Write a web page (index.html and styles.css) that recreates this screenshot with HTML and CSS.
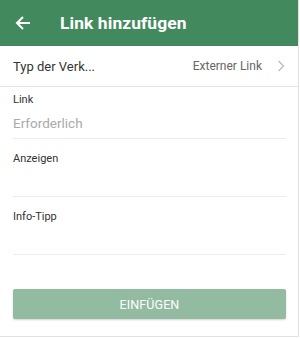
FILE: index.html
```html
<!DOCTYPE html>
<html lang="de">
<head>
<meta charset="utf-8">
<link rel="stylesheet" href="styles.css">
</head>
<body>
<div class="screen">
  <header class="appbar">
    <svg class="back" width="16" height="16" viewBox="0 0 16 16"><path d="M15 8H2M8 2L2 8l6 6" fill="none" stroke="#fff" stroke-width="2"/></svg>
    <h1 class="title">Link hinzufügen</h1>
  </header>
  <div class="typerow">
    <span class="typelabel">Typ der Verk...</span>
    <span class="typevalue">Externer Link</span>
    <svg class="chev" width="8" height="12" viewBox="0 0 8 12"><path d="M1.5 1l5 5-5 5" fill="none" stroke="#bdbdbd" stroke-width="1.4"/></svg>
  </div>
  <div class="fields">
    <div class="field first">
      <div class="label">Link</div>
      <div class="input placeholder">Erforderlich</div>
    </div>
    <div class="field">
      <div class="label">Anzeigen</div>
      <div class="input"></div>
    </div>
    <div class="field">
      <div class="label">Info-Tipp</div>
      <div class="input"></div>
    </div>
    <button class="submit">EINFÜGEN</button>
  </div>
</div>
</body>
</html>
```
FILE: styles.css
```css
html, body {
  margin: 0;
  padding: 0;
  background: #ffffff;
}
body {
  font-family: Roboto, "Liberation Sans", sans-serif;
}
.screen {
  width: 298px;
  height: 336px;
  border-right: 1px solid #e2e2e2;
  border-bottom: 1px solid #e2e2e2;
  background: #fff;
}
.appbar {
  height: 46px;
  background: #428a5d;
  display: flex;
  align-items: center;
  padding-left: 15px;
}
.back {
  display: block;
}
.title {
  margin: 0 0 0 29px;
  font-size: 17.4px;
  font-weight: 700;
  color: #fff;
  letter-spacing: 0.1px;
}
.typerow {
  height: 40px;
  border-bottom: 1px solid #e4e4e4;
  display: flex;
  align-items: center;
  padding: 0 13px;
}
.typelabel {
  font-size: 13px;
  color: #333;
  flex: 1;
}
.typevalue {
  font-size: 12px;
  color: #666;
  margin-right: 15px;
}
.chev {
  display: block;
}
.fields {
  padding: 0 12px 0 13px;
}
.field {
  padding-top: 13px;
  padding-bottom: 1px;
  border-bottom: 1px solid #ececec;
}
.field.first {
  padding-top: 6px;
  padding-bottom: 2px;
}
.label {
  font-size: 11px;
  line-height: 14px;
  color: #333;
}
.input {
  margin-top: 3px;
  height: 26px;
  line-height: 26px;
  font-size: 13.5px;
  color: #333;
}
.placeholder {
  color: #aaa;
}
.submit {
  display: block;
  width: 100%;
  margin-top: 34px;
  height: 30px;
  border: none;
  border-radius: 2px;
  background: #93bba1;
  color: #fff;
  font-family: Roboto, "Liberation Sans", sans-serif;
  font-size: 12.5px;
  font-weight: 400;
  letter-spacing: 0.1px;
  box-shadow: 0 1px 2px rgba(0,0,0,0.18);
  padding: 0;
}
```
